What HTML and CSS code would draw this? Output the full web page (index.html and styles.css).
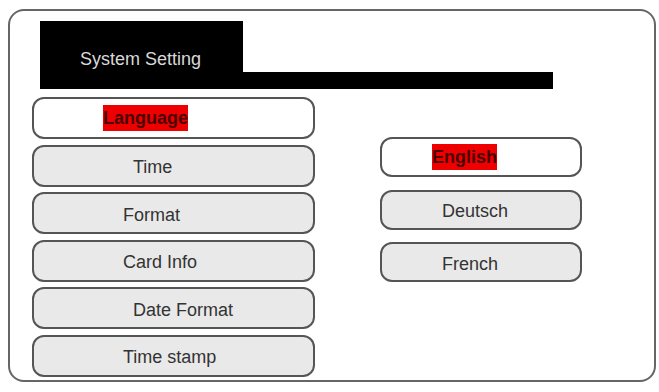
FILE: index.html
```html
<!DOCTYPE html>
<html>
    <head>
        <title> System Setting </title>

        <link rel="stylesheet" href="styles.css">
    </head>
    <body>
        <div class="frame">
            <div class="header">
                <div class="tab">System Setting</div>
                <div class="bar"></div>
            </div>

            <div class="content">
                <div class="menu">
                    <div class="menu-btn active lang"><span class="mark">Language</span></div>
                    <div class="menu-btn wide">Time</div>
                    <div class="menu-btn">Format</div>
                    <div class="menu-btn">Card Info</div>
                    <div class="menu-btn wide">Date Format</div>
                    <div class="menu-btn">Time stamp</div>
                </div>

                <div class="options">
                    <div class="opt-btn active eng"><span class="mark">English</span></div>
                    <div class="opt-btn">Deutsch</div>
                    <div class="opt-btn">French</div>
                </div>
            </div>
        </div>
    </body>
</html>
```

FILE: styles.css
```css
body{
    margin: 0;
    background-color: white;
    font-family: "Liberation Sans", Arial, Helvetica, sans-serif;
    font-size: 18px;
    color: #333;
}
.frame{
    box-sizing: border-box;
    width: 648px;
    height: 373px;
    margin: 9px 0 0 8px;
    border: 2px solid #666;
    border-radius: 16px;
}
.header{
    display: flex;
    align-items: flex-end;
    margin: 10px 0 0 30px;
}
.tab{
    box-sizing: border-box;
    width: 203px;
    height: 68px;
    background-color: black;
    color: #d8d8d8;
    padding: 28px 0 0 40px;
    line-height: 21px;
}
.bar{
    width: 310px;
    height: 17px;
    background-color: black;
}
.content{
    display: flex;
    align-items: flex-start;
    margin: 8px 0 0 22px;
}
.menu{
    display: flex;
    flex-direction: column;
    gap: 5.6px;
}
.menu-btn,.opt-btn{
    box-sizing: border-box;
    display: flex;
    align-items: center;
    border: 2px solid #555;
    border-radius: 12px;
    background-color: #e9e9e9;
    padding-top: 4px;
}
.menu-btn{
    width: 283px;
    height: 42px;
    padding-left: 89px;
}
.menu-btn.wide{
    padding-left: 99px;
}
.menu-btn.lang{
    padding-left: 69px;
}
.options{
    display: flex;
    flex-direction: column;
    gap: 12.5px;
    margin: 40px 0 0 65px;
}
.opt-btn{
    width: 202px;
    height: 40px;
    padding-left: 60px;
}
.opt-btn.eng{
    padding-left: 50px;
}
.active{
    background-color: white;
    padding-top: 0;
}
.mark{
    background-color: #ee0000;
    color: #4a0000;
    font-weight: bold;
    line-height: 26px;
}
```
